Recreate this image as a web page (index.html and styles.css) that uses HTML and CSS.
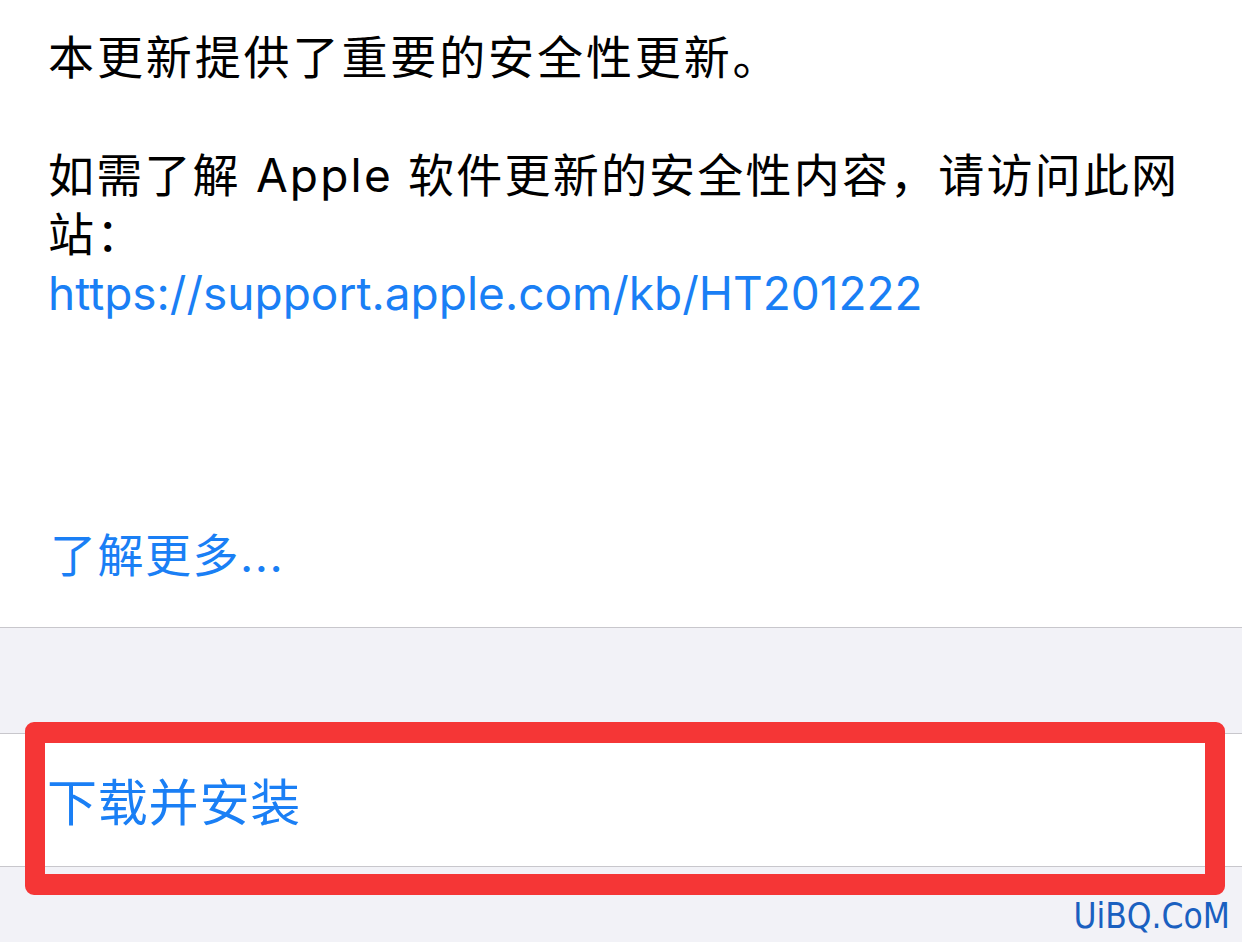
FILE: index.html
```html
<!DOCTYPE html>
<html lang="zh-CN">
<head>
<meta charset="utf-8">
<link rel="stylesheet" href="styles.css">
</head>
<body>
<div class="page">
  <section class="notes">
    <p class="line cjk wide">本更新提供了重要的安全性更新。</p>
    <p class="line blank">&nbsp;</p>
    <p class="line cjk">如需了解 Apple 软件更新的安全性内容，请访问此网</p>
    <p class="line cjk">站：</p>
    <p class="line link">https://support.apple.com/kb/HT201222</p>
    <p class="more link">了解更多...</p>
  </section>
  <div class="gap"></div>
  <section class="action">
    <span class="action-label">下载并安装</span>
  </section>
  <div class="footer">
    <span class="watermark">UiBQ.CoM</span>
  </div>
  <div class="highlight"></div>
</div>
</body>
</html>
```
FILE: styles.css
```css
* { box-sizing: border-box; }
html, body { margin: 0; padding: 0; }
body {
  width: 1242px;
  height: 942px;
  overflow: hidden;
  background: #f2f2f7;
  font-family: "Inter", "Noto Sans CJK SC", sans-serif;
  color: #000;
}
.page {
  position: relative;
  width: 1242px;
  height: 942px;
  display: flex;
  flex-direction: column;
}
.notes {
  background: #fff;
  height: 628px;
  padding: 28px 0 0 48px;
  border-bottom: 1px solid #c8c7cc;
}
.line {
  margin: 0;
  font-size: 46px;
  line-height: 59px;
  height: 59px;
  white-space: nowrap;
}
.cjk { letter-spacing: 2.2px; }
.wide { letter-spacing: 2.9px; }
.link { color: #1a7ff5; }
.more {
  margin: 203px 0 0 2px;
  font-size: 46px;
  line-height: 59px;
  letter-spacing: 1.5px;
}
.gap {
  height: 106px;
  border-bottom: 1px solid #c8c7cc;
}
.action {
  background: #fff;
  height: 133px;
  display: flex;
  align-items: center;
  padding: 6px 0 0 47px;
  border-bottom: 1px solid #c8c7cc;
}
.action-label {
  color: #1a7ff5;
  font-size: 50px;
  line-height: 60px;
  letter-spacing: 0.8px;
}
.footer {
  flex: 1;
  display: flex;
  justify-content: flex-end;
  align-items: flex-start;
  padding: 32px 12px 0 0;
}
.watermark {
  font-family: "DejaVu Sans Condensed", "DejaVu Sans", sans-serif;
  font-size: 35px;
  line-height: 34px;
  color: #1a60c0;
}
.highlight {
  position: absolute;
  left: 25px;
  top: 722px;
  width: 1200px;
  height: 173px;
  border: 21px solid #f53636;
  border-left-width: 20px;
  border-right-width: 20px;
  border-radius: 9px;
}
```
